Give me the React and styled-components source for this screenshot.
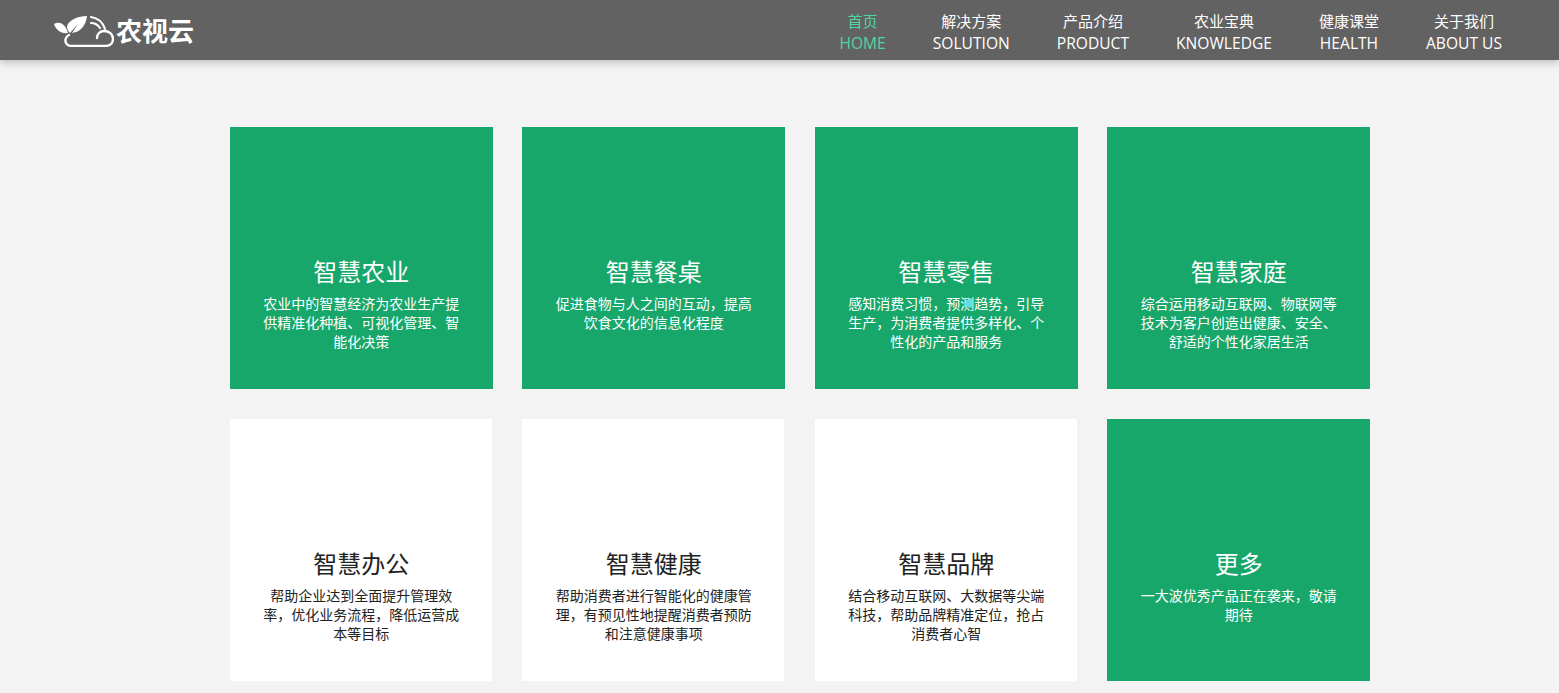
import styled, { createGlobalStyle } from 'styled-components';

const GlobalStyle = createGlobalStyle`
  html, body {
    margin: 0;
    padding: 0;
    height: 693px;
    overflow: hidden;
    background: #f3f3f3;
    font-family: "Noto Sans CJK SC", sans-serif;
  }
`;

const Header = styled.header`
  height: 60px;
  background: #626262;
  box-shadow: 0 2px 8px rgba(0, 0, 0, 0.25);
  display: flex;
  align-items: center;
  justify-content: space-between;
  padding: 0 57px 0 53px;
`;

const Logo = styled.div`
  display: flex;
  align-items: center;
  gap: 2px;
  color: #fff;
  font-size: 26px;
  line-height: 32px;
  font-weight: 700;
`;

const Nav = styled.nav`
  display: flex;
  gap: 47px;
  padding-top: 4px;
`;

const NavItem = styled.a`
  display: flex;
  flex-direction: column;
  align-items: center;
  color: ${(p) => (p.$active ? '#4fd6a0' : '#fff')};
  font-size: 15px;
  line-height: 22px;
`;

const NavEn = styled.span`
  font-family: "Open Sans", sans-serif;
  font-size: 15.6px;
`;

const Grid = styled.main`
  margin: 67px 0 0 229.75px;
  display: grid;
  grid-template-columns: repeat(4, 262.9px);
  grid-auto-rows: 262px;
  column-gap: 29.6px;
  row-gap: 30px;
`;

const Card = styled.section`
  background: ${(p) => (p.$green ? '#18a76b' : '#fff')};
  color: ${(p) => (p.$green ? '#fff' : '#222')};
  margin-right: ${(p) => (p.$green ? 0 : 1)}px;
  padding: 127px ${(p) => (p.$green ? 32 : 31)}px 0 32px;
  text-align: center;
`;

const Title = styled.h2`
  margin: 0 0 6px;
  font-size: 24px;
  line-height: 34px;
  font-weight: 400;
`;

const Desc = styled.p`
  margin: 0;
  font-size: 14px;
  line-height: 19px;
`;

const cards = [
  ['智慧农业', '农业中的智慧经济为农业生产提供精准化种植、可视化管理、智能化决策', true],
  ['智慧餐桌', '促进食物与人之间的互动\uFF0C提高饮食文化的信息化程度', true],
  ['智慧零售', '感知消费习惯\uFF0C预测趋势\uFF0C引导生产\uFF0C为消费者提供多样化、个性化的产品和服务', true],
  ['智慧家庭', '综合运用移动互联网、物联网等技术为客户创造出健康、安全、舒适的个性化家居生活', true],
  ['智慧办公', '帮助企业达到全面提升管理效率\uFF0C优化业务流程\uFF0C降低运营成本等目标', false],
  ['智慧健康', '帮助消费者进行智能化的健康管理\uFF0C有预见性地提醒消费者预防和注意健康事项', false],
  ['智慧品牌', '结合移动互联网、大数据等尖端科技\uFF0C帮助品牌精准定位\uFF0C抢占消费者心智', false],
  ['更多', '一大波优秀产品正在袭来\uFF0C敬请期待', true],
];

const links = [
  ['首页', 'HOME'],
  ['解决方案', 'SOLUTION'],
  ['产品介绍', 'PRODUCT'],
  ['农业宝典', 'KNOWLEDGE'],
  ['健康课堂', 'HEALTH'],
  ['关于我们', 'ABOUT US'],
];

function LogoMark() {
  return (
    <svg width="61" height="34" viewBox="0 0 61 34" fill="none">
      <path d="M1 11 C6 8 12 10 15 20 C8 21 3 17 1 11Z" fill="#fff" />
      <path d="M14 13 C16 7 25 3 34 3 C33 12 28 19 19 20 L25 11 L17 20 C15 18 14 16 14 13Z" fill="#fff" />
      <path d="M16 22 C12 24 12 28 13 30 C14 32 16 33 19 33 H52 C57 33 60 30 60 26 C60 21 56 18 51 18 C47 18 44 21 44 25" stroke="#fff" strokeWidth="2.4" strokeLinecap="round" />
      <path d="M38 4 C45 5 50 10 52 16" stroke="#fff" strokeWidth="2.2" strokeLinecap="round" />
      <path d="M38 10 C42 10 45 12 47 15" stroke="#fff" strokeWidth="2.2" strokeLinecap="round" />
    </svg>
  );
}

export default function App() {
  return (
    <>
      <GlobalStyle />
      <Header>
        <Logo>
          <LogoMark />
          农视云
        </Logo>
        <Nav>
          {links.map(([cn, en], i) => (
            <NavItem key={en} $active={i === 0}>
              <span>{cn}</span>
              <NavEn>{en}</NavEn>
            </NavItem>
          ))}
        </Nav>
      </Header>
      <Grid>
        {cards.map(([title, desc, green]) => (
          <Card key={title} $green={green}>
            <Title>{title}</Title>
            <Desc>{desc}</Desc>
          </Card>
        ))}
      </Grid>
    </>
  );
}
